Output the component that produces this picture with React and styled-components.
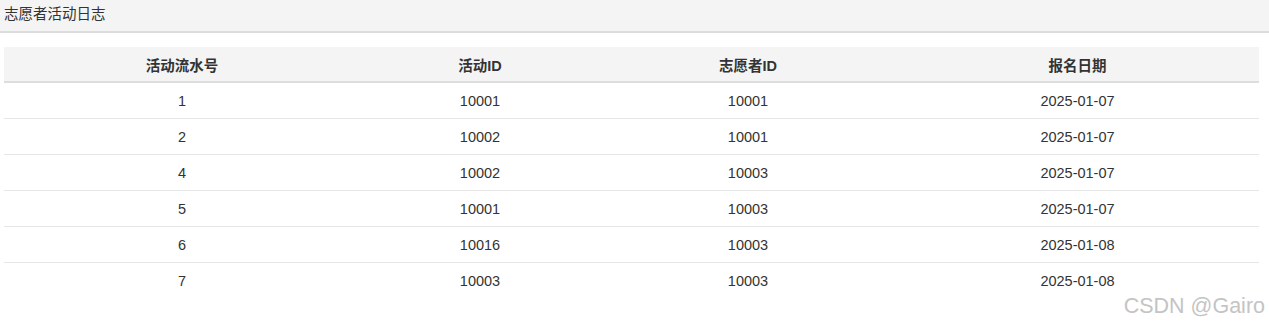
import React from "react";
import styled, { createGlobalStyle } from "styled-components";

const GlobalStyle = createGlobalStyle`
  body {
    margin: 0;
    background: #fff;
    font-family: "Liberation Sans", Arial, "Noto Sans CJK SC", sans-serif;
    color: #333;
  }
`;

const rows = [
  { id: 1, act: "10001", vol: "10001", date: "2025-01-07" },
  { id: 2, act: "10002", vol: "10001", date: "2025-01-07" },
  { id: 4, act: "10002", vol: "10003", date: "2025-01-07" },
  { id: 5, act: "10001", vol: "10003", date: "2025-01-07" },
  { id: 6, act: "10016", vol: "10003", date: "2025-01-08" },
  { id: 7, act: "10003", vol: "10003", date: "2025-01-08" },
];

const Page = styled.div`
  position: relative;
  width: 1269px;
  height: 322px;
  overflow: hidden;
`;

const TitleBar = styled.div`
  height: 33px;
  box-sizing: border-box;
  padding: 6px 4px 0;
  background: #f4f4f4;
  border-bottom: 2px solid #dcdcdc;
  font-size: 14.5px;
  line-height: 17px;
  color: #333;
`;

const Table = styled.table`
  margin: 14px 0 0 4px;
  width: 1255px;
  border-collapse: collapse;
  table-layout: fixed;
  font-size: 14.5px;
  color: #333;
`;

const Th = styled.th`
  width: ${(p) => p.$w}px;
  height: 34px;
  padding: 0;
  background: #f4f4f4;
  border-bottom: 2px solid #dddddd;
  font-weight: bold;
  text-align: center;
  vertical-align: middle;
`;

const Td = styled.td`
  height: 35px;
  padding: 0;
  text-align: center;
  vertical-align: middle;
  border-top: ${(p) => (p.$first ? "none" : "1px solid #e6e6e6")};
`;

const Watermark = styled.div`
  position: absolute;
  right: 4px;
  bottom: 4px;
  font-size: 21.5px;
  line-height: 24px;
  color: #c4c4c4;
  text-shadow: 0 0 1px #fff;
`;

export default function App() {
  return (
    <Page>
      <GlobalStyle />
      <TitleBar>志愿者活动日志</TitleBar>
      <Table>
        <thead>
          <tr>
            <Th $w={356}>活动流水号</Th>
            <Th $w={240}>活动ID</Th>
            <Th $w={296}>志愿者ID</Th>
            <Th $w={363}>报名日期</Th>
          </tr>
        </thead>
        <tbody>
          {rows.map((r, i) => (
            <tr key={r.id}>
              <Td $first={i === 0}>{r.id}</Td>
              <Td $first={i === 0}>{r.act}</Td>
              <Td $first={i === 0}>{r.vol}</Td>
              <Td $first={i === 0}>{r.date}</Td>
            </tr>
          ))}
        </tbody>
      </Table>
      <Watermark>CSDN @Gairo</Watermark>
    </Page>
  );
}
